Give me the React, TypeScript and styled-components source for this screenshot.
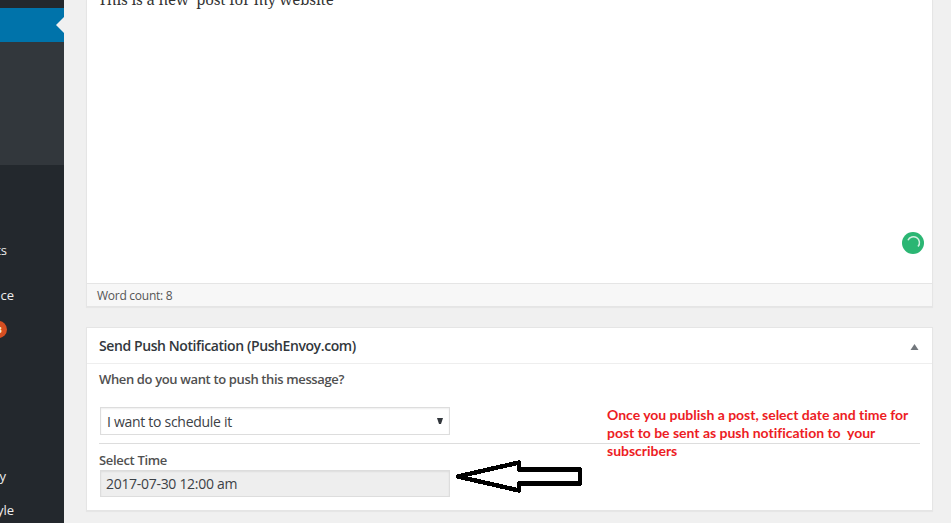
import React from 'react';
import styled, { createGlobalStyle } from 'styled-components';

const Global = createGlobalStyle`
  * { box-sizing: border-box; }
  body { margin: 0; background: #f0f0f0; overflow: hidden; font-family: 'Open Sans', 'Noto Sans', sans-serif; }
`;

const Page = styled.div`
  display: flex;
  width: 951px;
  height: 523px;
  overflow: hidden;
  background: #f0f0f0;
`;

const Sidebar = styled.nav`
  flex: none;
  width: 64px;
  height: 523px;
  padding-top: 8px;
  overflow: hidden;
  background: #23282d;
`;

const ActiveItem = styled.div`
  display: flex;
  justify-content: flex-end;
  align-items: center;
  height: 34px;
  background: #0073aa;
`;

const Notch = styled.div`
  border: 8px solid transparent;
  border-left-width: 0;
  border-right-color: #f0f0f0;
`;

const Submenu = styled.div`
  height: 123px;
  margin-bottom: 68px;
  background: #32373c;
`;

const MenuItem = styled.div<{ $end: number; $h: number }>`
  display: flex;
  justify-content: flex-end;
  align-items: flex-start;
  width: ${p => p.$end}px;
  height: ${p => p.$h}px;
  color: #eee;
  font-size: 13px;
  line-height: 34px;
  white-space: nowrap;
`;

const Badge = styled.span`
  flex: none;
  width: 17px;
  height: 17px;
  margin-top: 9px;
  border-radius: 9px;
  background: #d54e21;
  color: #fff;
  font-size: 9px;
  font-weight: 600;
  line-height: 17px;
  text-align: right;
  padding-right: 5px;
`;

const Content = styled.main`
  display: flex;
  flex-direction: column;
  gap: 20px;
  width: 847px;
  margin-left: 22px;
`;

const Card = styled.section<{ $h: number }>`
  position: relative;
  display: flex;
  flex-direction: column;
  flex: none;
  height: ${p => p.$h}px;
  background: #fff;
  border: 1px solid #e5e5e5;
  box-shadow: 0 1px 1px rgba(0, 0, 0, 0.04);
`;

const EditorCard = styled(Card)`
  border-top: 0;
`;

const Editor = styled.div`
  height: 283px;
  padding-left: 11px;
  overflow: hidden;
`;

const PostText = styled.p`
  margin: -11px 0 0;
  color: #333;
  font: 15px/20px 'Noto Serif', 'DejaVu Serif Condensed', 'DejaVu Serif', serif;
  letter-spacing: -0.15px;
  white-space: pre;
`;

const Status = styled.div`
  height: 23px;
  padding-left: 10px;
  border-top: 1px solid #e5e5e5;
  background: #f7f7f7;
`;

const Label = styled.span<{ $size: number; $weight?: number; $color?: string; $space?: number; $line: number }>`
  display: block;
  color: ${p => p.$color || '#444'};
  font-size: ${p => p.$size}px;
  font-weight: ${p => p.$weight || 400};
  letter-spacing: ${p => p.$space || 0}px;
  line-height: ${p => p.$line}px;
  white-space: pre;
`;

const FieldText = styled(Label)`
  padding-top: 2px;
`;

const Checker = styled.svg`
  position: absolute;
  right: 8px;
  top: 232px;
`;

const CardHeader = styled.header`
  display: flex;
  align-items: center;
  justify-content: space-between;
  height: 36px;
  padding: 2px 13px 0 12px;
  border-bottom: 1px solid #eee;
`;

const CardTitle = styled(Label)`
  padding-bottom: 2px;
`;

const CardBody = styled.div`
  display: flex;
  flex-direction: column;
  padding: 5px 12px 0;
`;

const Field = styled.div<{ $disabled?: boolean }>`
  display: flex;
  align-items: center;
  justify-content: space-between;
  width: 350px;
  height: ${p => (p.$disabled ? 27 : 28)}px;
  margin-left: 1px;
  margin-top: ${p => (p.$disabled ? 0 : 18)}px;
  padding: 0 6px 0 ${p => (p.$disabled ? 5 : 6)}px;
  border: 1px solid #ddd;
  background: ${p => (p.$disabled ? '#eee' : '#fff')};
  box-shadow: inset 0 1px 2px rgba(0, 0, 0, 0.07);
`;

const Rule = styled.hr`
  width: 821px;
  height: 1px;
  margin: 8px 0 7px;
  border: 0;
  background: #ddd;
`;

const Note = styled.p`
  position: absolute;
  left: 520px;
  top: 78px;
  margin: 0;
  color: #ed1c24;
  font: 700 14px/18px Lato, sans-serif;
  letter-spacing: -0.02px;
  white-space: pre;
`;

const Arrow = styled.svg`
  position: absolute;
  left: 368px;
  top: 130px;
`;

export default function App() {
  return (
    <Page>
      <Global />
      <Sidebar>
        <ActiveItem><Notch /></ActiveItem>
        <Submenu />
        <MenuItem $end={7} $h={45}>ts</MenuItem>
        <MenuItem $end={14} $h={34}>ce</MenuItem>
        <MenuItem $end={7} $h={147}><Badge>3</Badge></MenuItem>
        <MenuItem $end={6} $h={34}>y</MenuItem>
        <MenuItem $end={14} $h={34}>yle</MenuItem>
      </Sidebar>
      <Content>
        <EditorCard $h={307}>
          <Editor>
            <PostText>{'This is a new  post for my website'}</PostText>
          </Editor>
          <Status><Label $size={12} $line={24} $color="#555" $space={-0.26}>Word count: 8</Label></Status>
          <Checker width="22" height="22" viewBox="0 0 22 22" fill="none">
            <circle cx="11" cy="11" r="11" fill="#2bb673" />
            <path d="M6 8.2A6 6 0 1 1 16 14.6" stroke="#d5f0e3" strokeWidth="1.5" />
          </Checker>
        </EditorCard>
        <Card $h={184}>
          <CardHeader>
            <CardTitle $size={14} $weight={600} $line={32} $color="#32373c" $space={-0.41}>Send Push Notification (PushEnvoy.com)</CardTitle>
            <svg width="9" height="6" viewBox="0 0 9 6"><path d="M4.5 0 8.5 6H.5Z" fill="#72777c" /></svg>
          </CardHeader>
          <CardBody>
            <Label $size={13} $weight={600} $line={20} $color="#505050" $space={-0.36}>When do you want to push this message?</Label>
            <Field>
              <FieldText $size={14} $line={26} $color="#3c4146" $space={-0.29}>I want to schedule it</FieldText>
              <svg width="6" height="7" viewBox="0 0 6 7"><path d="M0 0H6L4 6H2Z" fill="#32373c" /></svg>
            </Field>
            <Rule />
            <Label $size={13} $weight={600} $line={19} $color="#505050" $space={-0.33}>Select Time</Label>
            <Field $disabled>
              <Label $size={14} $line={25} $color="#3c4146" $space={-0.3}>2017-07-30 12:00 am</Label>
            </Field>
          </CardBody>
          <Note>{'Once you publish a post, select date and time for\npost to be sent as push notification to  your\nsubscribers'}</Note>
          <Arrow width="130" height="36" viewBox="0 0 130 36" fill="none">
            <path d="M3 18.5 64 4.5V11.5H125V25.5H64V32.5Z" stroke="#000" strokeWidth="4.5" strokeLinejoin="round" shapeRendering="crispEdges" />
          </Arrow>
        </Card>
      </Content>
    </Page>
  );
}
